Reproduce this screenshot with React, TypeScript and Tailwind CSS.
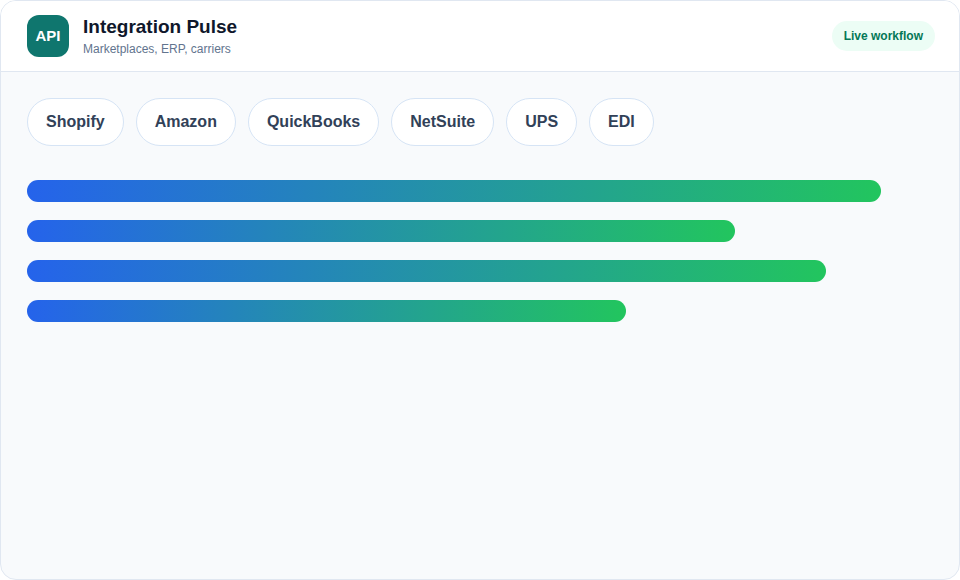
import React from 'react';

const integrations = ['Shopify', 'Amazon', 'QuickBooks', 'NetSuite', 'UPS', 'EDI'];

const bars = [94.3, 78.1, 88.2, 66.1];

export default function App() {
  return (
    <div className="w-[960px] h-[580px] bg-white" style={{ fontFamily: '"Liberation Sans", Arial, sans-serif' }}>
      <div className="h-full rounded-2xl border border-[#e0e7f1] bg-slate-50 overflow-hidden flex flex-col">
        {/* Header */}
        <div className="h-[71px] shrink-0 bg-white border-b border-[#e0e7f1] pl-[26px] pr-[24px] flex items-center justify-between">
          <div className="flex items-center gap-[14px]">
            <div className="w-[42px] h-[42px] rounded-xl bg-[#0f766e] text-white font-bold text-[15px] flex items-center justify-center">
              API
            </div>
            <div className="flex flex-col">
              <h1 className="text-[19px] leading-[24px] font-bold text-slate-900">Integration Pulse</h1>
              <p className="text-[12px] leading-[16px] text-slate-500 mt-[2px]">Marketplaces, ERP, carriers</p>
            </div>
          </div>
          <span className="h-[30px] px-3 rounded-full bg-[#ecfdf5] text-[#047857] text-[12px] font-bold flex items-center">
            Live workflow
          </span>
        </div>

        {/* Body */}
        <div className="flex-1 px-[26px] pt-[26px]">
          <div className="flex gap-3">
            {integrations.map(name => (
              <div
                key={name}
                className="h-12 px-[18px] rounded-full border border-[#d6e4f5] bg-white text-slate-700 text-[16px] font-bold flex items-center"
              >
                {name}
              </div>
            ))}
          </div>

          <div className="mt-[34px] flex flex-col gap-[18px]">
            {bars.map((w, i) => (
              <div key={i} className="h-[22px]">
                <div
                  className="h-full rounded-full bg-[linear-gradient(to_right,#2563eb,#22c55e)]"
                  style={{ width: `${w}%` }}
                />
              </div>
            ))}
          </div>
        </div>
      </div>
    </div>
  );
}
